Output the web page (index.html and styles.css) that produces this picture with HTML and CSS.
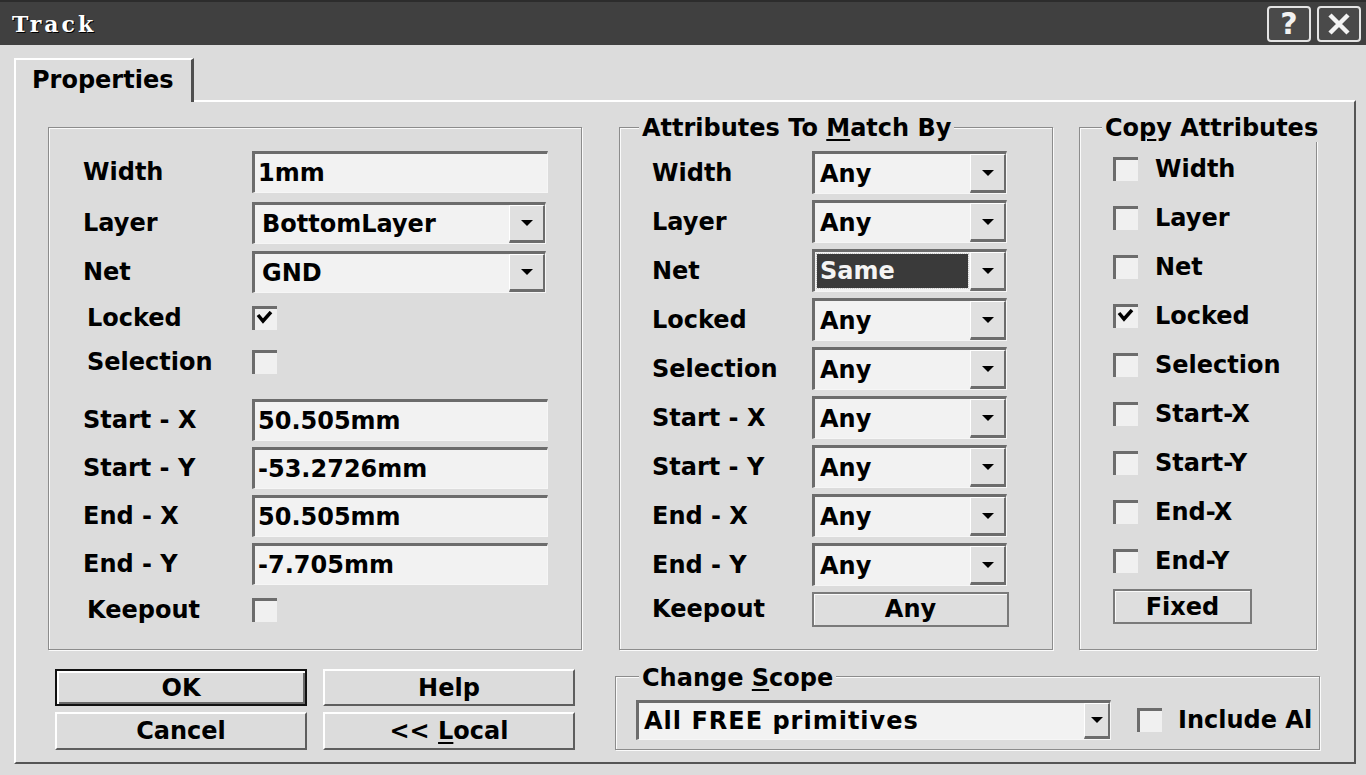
FILE: index.html
```html
<!DOCTYPE html>
<html lang="en">
<head>
  <meta charset="UTF-8">
  <title>Track</title>
  <link rel="stylesheet" href="styles.css">
</head>
<body>
<div class="window">
  <div class="titlebar">
    <span class="title">Track</span>
    <div class="caption-btns">
      <span class="cap-btn">?</span>
      <span class="cap-btn">
        <svg width="28" height="26" viewBox="0 0 28 26"><path d="M5 4 L23 22 M23 4 L5 22" stroke="#f2f2f2" stroke-width="4.5" fill="none"/></svg>
      </span>
    </div>
  </div>

  <div class="client">
    <div class="tabs"><div class="tab">Properties</div></div>

    <div class="panel">
      <div class="top-row">

        <!-- track properties -->
        <div class="group props">
          <div class="row h51"><span class="lbl">Width</span><div class="edit">1mm</div></div>
          <div class="row h51"><span class="lbl">Layer</span>
            <div class="combo"><span class="val">BottomLayer</span><span class="drop"><i></i></span></div>
          </div>
          <div class="row h48"><span class="lbl">Net</span>
            <div class="combo"><span class="val">GND</span><span class="drop"><i></i></span></div>
          </div>
          <div class="row h44"><span class="lbl inset">Locked</span>
            <span class="check"><svg width="18" height="14" viewBox="0 0 18 14"><path d="M2 4 L7 10 L15 1" stroke="#000" stroke-width="3.5" fill="none"/></svg></span>
          </div>
          <div class="row h44"><span class="lbl inset">Selection</span><span class="check"></span></div>
          <div class="row h48 gap-top"><span class="lbl">Start - X</span><div class="edit">50.505mm</div></div>
          <div class="row h48"><span class="lbl">Start - Y</span><div class="edit">-53.2726mm</div></div>
          <div class="row h48"><span class="lbl">End - X</span><div class="edit">50.505mm</div></div>
          <div class="row h48"><span class="lbl">End - Y</span><div class="edit">-7.705mm</div></div>
          <div class="row h44"><span class="lbl inset">Keepout</span><span class="check"></span></div>
        </div>

        <!-- attributes to match by -->
        <div class="group match">
          <span class="group-title">Attributes To <u>M</u>atch By</span>
          <div class="row h49"><span class="lbl">Width</span><div class="combo"><span class="val">Any</span><span class="drop"><i></i></span></div></div>
          <div class="row h49"><span class="lbl">Layer</span><div class="combo"><span class="val">Any</span><span class="drop"><i></i></span></div></div>
          <div class="row h49"><span class="lbl">Net</span><div class="combo"><span class="val sel">Same</span><span class="drop"><i></i></span></div></div>
          <div class="row h49"><span class="lbl">Locked</span><div class="combo"><span class="val">Any</span><span class="drop"><i></i></span></div></div>
          <div class="row h49"><span class="lbl">Selection</span><div class="combo"><span class="val">Any</span><span class="drop"><i></i></span></div></div>
          <div class="row h49"><span class="lbl">Start - X</span><div class="combo"><span class="val">Any</span><span class="drop"><i></i></span></div></div>
          <div class="row h49"><span class="lbl">Start - Y</span><div class="combo"><span class="val">Any</span><span class="drop"><i></i></span></div></div>
          <div class="row h49"><span class="lbl">End - X</span><div class="combo"><span class="val">Any</span><span class="drop"><i></i></span></div></div>
          <div class="row h49"><span class="lbl">End - Y</span><div class="combo"><span class="val">Any</span><span class="drop"><i></i></span></div></div>
          <div class="row h40"><span class="lbl">Keepout</span><span class="flat-btn any">Any</span></div>
        </div>

        <!-- copy attributes -->
        <div class="group copy">
          <span class="group-title">Co<u>p</u>y Attributes</span>
          <div class="row h49"><span class="check"></span><span class="opt">Width</span></div>
          <div class="row h49"><span class="check"></span><span class="opt">Layer</span></div>
          <div class="row h49"><span class="check"></span><span class="opt">Net</span></div>
          <div class="row h49"><span class="check"><svg width="18" height="14" viewBox="0 0 18 14"><path d="M2 4 L7 10 L15 1" stroke="#000" stroke-width="3.5" fill="none"/></svg></span><span class="opt">Locked</span></div>
          <div class="row h49"><span class="check"></span><span class="opt">Selection</span></div>
          <div class="row h49"><span class="check"></span><span class="opt">Start-X</span></div>
          <div class="row h49"><span class="check"></span><span class="opt">Start-Y</span></div>
          <div class="row h49"><span class="check"></span><span class="opt">End-X</span></div>
          <div class="row h49"><span class="check"></span><span class="opt">End-Y</span></div>
          <span class="flat-btn fixed">Fixed</span>
        </div>
      </div>

      <div class="bottom-row">
        <div class="buttons">
          <span class="btn default">OK</span>
          <span class="btn">Help</span>
          <span class="btn">Cancel</span>
          <span class="btn"><span>&lt;&lt; <u>L</u>ocal</span></span>
        </div>

        <div class="group scope">
          <span class="group-title">Change <u>S</u>cope</span>
          <div class="scope-row">
            <div class="combo scope-combo"><span class="val">All FREE primitives</span><span class="drop small"><i></i></span></div>
            <span class="check"></span>
            <span class="include">Include All</span>
          </div>
        </div>
      </div>
    </div>
  </div>
</div>
</body>
</html>
```

FILE: styles.css
```css
* {
  box-sizing: border-box;
}

body {
  margin: 0;
  background-color: #dcdcdc;
  font-family: "DejaVu Sans", "Liberation Sans", sans-serif;
  font-weight: bold;
  font-size: 24px;
  color: #000;
}

u {
  text-decoration-thickness: 2px;
  text-underline-offset: 3px;
}

.window {
  width: 1366px;
  height: 775px;
  overflow: hidden;
}

/* title bar */
.titlebar {
  height: 45px;
  background-color: #404040;
  border-top: 2px solid #2c2c2c;
  display: flex;
  align-items: center;
  justify-content: space-between;
  padding: 0 5px 0 12px;
}

.title {
  font-family: "DejaVu Serif", serif;
  font-size: 22px;
  color: #fff;
  letter-spacing: 3px;
  text-shadow: 1px 1px 0 #000;
}

.caption-btns {
  display: flex;
  gap: 6px;
}

.cap-btn {
  width: 44px;
  height: 36px;
  border: 2px solid #e4e4e4;
  border-radius: 4px;
  background-color: #4a4a4a;
  color: #f2f2f2;
  font-size: 30px;
  display: flex;
  align-items: center;
  justify-content: center;
}

/* tab control */
.client {
  padding: 13px 10px 0 14px;
}

.tabs {
  display: flex;
}

.tab {
  position: relative;
  z-index: 1;
  width: 180px;
  height: 44px;
  margin-bottom: -2px;
  padding: 0 0 2px 16px;
  background-color: #dcdcdc;
  border-top: 2px solid #fff;
  border-left: 2px solid #fff;
  border-right: 3px solid #4e4e4e;
  display: flex;
  align-items: center;
}

.panel {
  height: 664px;
  border-top: 2px solid #fff;
  border-left: 2px solid #fff;
  border-right: 2px solid #555;
  border-bottom: 2px solid #555;
  padding: 25px 0 0 32px;
}

.top-row {
  display: flex;
  height: 523px;
}

/* group boxes */
.group {
  position: relative;
  border: 1px solid #8c8c8c;
  box-shadow: inset 1px 1px 0 #fafafa, 1px 1px 0 #fafafa;
}

.group-title {
  position: absolute;
  top: -14px;
  padding: 0 3px;
  line-height: 28px;
  background-color: #dcdcdc;
  white-space: nowrap;
}

.props {
  width: 534px;
  padding: 18px 0 0 34px;
}

.match {
  width: 434px;
  margin-left: 37px;
  padding: 20px 0 0 32px;
}

.match .group-title {
  left: 19px;
}

.copy {
  width: 238px;
  margin-left: 26px;
  padding: 16px 0 0 33px;
}

.copy .group-title {
  left: 22px;
}

.row {
  display: flex;
  align-items: center;
}

.h40 { height: 40px; }
.h44 { height: 44px; }
.h48 { height: 48px; }
.h49 { height: 49px; }
.h51 { height: 51px; }

.gap-top {
  margin-top: 12px;
}

.lbl {
  width: 169px;
  flex-shrink: 0;
}

.lbl.inset {
  padding-left: 4px;
}

.match .lbl {
  width: 160px;
}

.opt {
  margin-left: 17px;
}

/* edit boxes and combos */
.edit {
  width: 296px;
  height: 42px;
  padding-left: 3px;
  background-color: #f2f2f2;
  border-top: 3px solid #6c6c6c;
  border-left: 3px solid #6c6c6c;
  border-right: 1px solid #f6f6f6;
  border-bottom: 1px solid #f6f6f6;
  display: flex;
  align-items: center;
}

.combo {
  width: 294px;
  height: 42px;
  background-color: #f2f2f2;
  border-top: 3px solid #6c6c6c;
  border-left: 3px solid #6c6c6c;
  border-right: 1px solid #f6f6f6;
  border-bottom: 1px solid #f6f6f6;
  display: flex;
}

.match .combo {
  width: 195px;
  height: 43px;
}

.combo .val {
  flex: 1;
  padding-left: 7px;
  display: flex;
  align-items: center;
  white-space: nowrap;
  overflow: hidden;
}

.match .combo .val {
  padding-left: 5px;
}

.combo .val.sel {
  margin: 2px 2px 3px 2px;
  padding-left: 3px;
  background-color: #3a3a3a;
  color: #f4f4f4;
  outline: 1px dotted #c8c8c8;
}

.drop {
  width: 36px;
  flex-shrink: 0;
  background-color: #e0e0e0;
  border-top: 1px solid #fff;
  border-left: 1px solid #fff;
  border-right: 2px solid #6c6c6c;
  border-bottom: 3px solid #6c6c6c;
  display: flex;
  align-items: center;
  justify-content: center;
}

.drop.small {
  width: 26px;
}

.drop i {
  width: 0;
  height: 0;
  border-left: 6px solid transparent;
  border-right: 6px solid transparent;
  border-top: 6px solid #000;
}

.check {
  width: 25px;
  height: 24px;
  flex-shrink: 0;
  background-color: #f0f0f0;
  border-top: 3px solid #6c6c6c;
  border-left: 3px solid #6c6c6c;
  display: flex;
  align-items: flex-start;
  justify-content: flex-start;
  padding: 2px 0 0 1px;
}

/* buttons */
.flat-btn {
  display: flex;
  align-items: center;
  justify-content: center;
  height: 35px;
  background-color: #dedede;
  border: 2px solid #7a7a7a;
  box-shadow: inset 1px 1px 0 #fafafa;
}

.flat-btn.any {
  width: 197px;
}

.flat-btn.fixed {
  width: 139px;
  margin-top: 4px;
}

.bottom-row {
  display: flex;
  margin-top: 19px;
}

.buttons {
  margin-left: 7px;
  display: grid;
  grid-template-columns: 252px 252px;
  grid-template-rows: 37px 38px;
  column-gap: 16px;
  row-gap: 6px;
}

.btn {
  display: flex;
  align-items: center;
  justify-content: center;
  background-color: #dcdcdc;
  border: 2px solid;
  border-color: #fff #5e5e5e #5e5e5e #fff;
}

.btn.default {
  border: 2px solid #111;
  box-shadow: inset 2px 2px 0 #fff, inset -2px -2px 0 #6a6a6a;
}

.scope {
  width: 705px;
  height: 74px;
  margin: 7px 0 0 40px;
  padding: 23px 0 0 20px;
}

.scope .group-title {
  left: 23px;
  top: -13px;
}

.scope-row {
  display: flex;
  align-items: center;
  height: 40px;
}

.scope-combo {
  width: 475px;
  height: 40px;
}

.scope-combo .val {
  padding-left: 5px;
  letter-spacing: 1px;
}

.scope-row .check {
  margin-left: 26px;
}

.include {
  width: 133px;
  margin-left: 16px;
  overflow: hidden;
  white-space: nowrap;
}
```
